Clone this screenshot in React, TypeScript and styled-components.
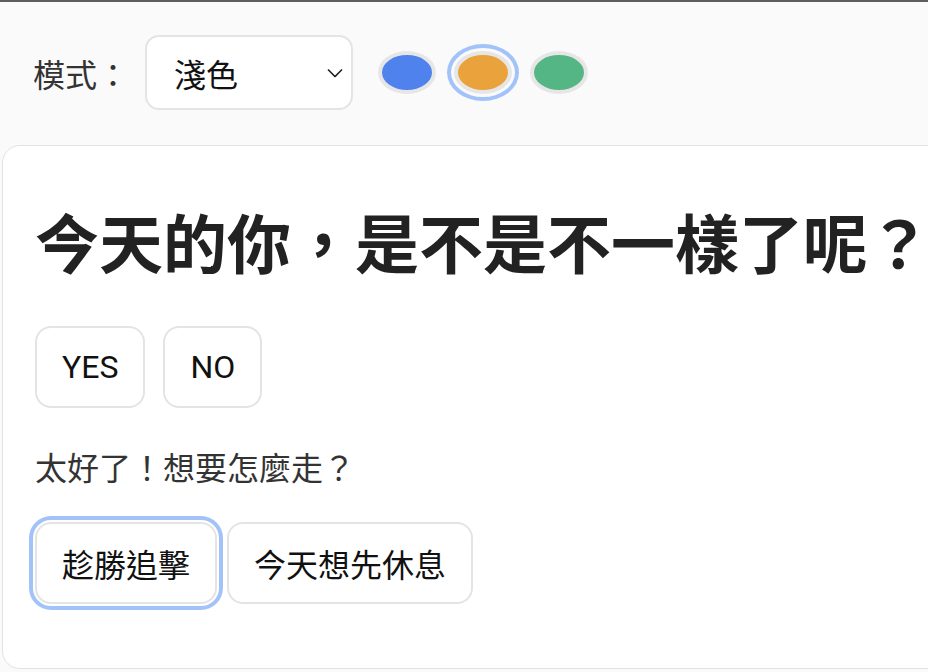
import React, { useState } from "react";
import styled, { createGlobalStyle, css } from "styled-components";

const GlobalStyle = createGlobalStyle`
  html, body {
    margin: 0;
    padding: 0;
    background: #fafafa;
    overflow: hidden;
  }
  body {
    font-family: "Roboto", "Noto Sans CJK TC", "Noto Sans", sans-serif;
    color: #222;
  }
  * { box-sizing: border-box; }
`;

const Page = styled.div`
  border-top: 2px solid #5e5e5e;
  min-height: 672px;
  padding-left: 2px;
  overflow: hidden;
`;

const Toolbar = styled.div`
  display: flex;
  align-items: center;
  padding: 33px 0 35px 31px;
`;

const Label = styled.span`
  font-size: 32px;
  color: #333;
  margin-right: 16px;
  font-family: "Noto Sans CJK TC", sans-serif;
`;

const SelectWrap = styled.div`
  position: relative;
  margin-right: 25px;
`;

const Select = styled.select`
  appearance: none;
  -webkit-appearance: none;
  width: 208px;
  height: 75px;
  border: 2px solid #e4e4e4;
  border-radius: 14px;
  background: #fff;
  padding: 0 0 0 27px;
  font-size: 32px;
  font-family: "Noto Sans CJK TC", sans-serif;
  color: #111;
  outline: none;
`;

const Chevron = styled.svg`
  position: absolute;
  right: 10px;
  top: 50%;
  transform: translateY(-50%);
  pointer-events: none;
`;

const Swatches = styled.div`
  display: flex;
  gap: 18px;
`;

const ring = css`
  box-shadow: 0 0 0 3px #fafafa, 0 0 0 7px #a2c3f9;
`;

const Swatch = styled.button<{ $color: string; $active?: boolean }>`
  width: 58px;
  height: 43px;
  border-radius: 50%;
  border: 4px solid #e6e6e6;
  background: ${(p) => p.$color};
  padding: 0;
  cursor: pointer;
  ${(p) => p.$active && ring}
`;

const Card = styled.div`
  width: 1000px;
  background: #fff;
  border: 1px solid #e2e2e2;
  border-radius: 18px;
  padding: 32px 32px 64px 32px;
`;

const Heading = styled.h1`
  margin: 25px 0 0;
  font-size: 64px;
  line-height: 74px;
  font-weight: 700;
  color: #222;
  white-space: nowrap;
  font-family: "Noto Sans CJK TC", sans-serif;
`;

const ButtonRow = styled.div<{ $gap: number; $top: number }>`
  display: flex;
  gap: ${(p) => p.$gap}px;
  margin-top: ${(p) => p.$top}px;
`;

const Btn = styled.button<{ $active?: boolean }>`
  height: 82px;
  padding: 0 25px;
  border: 2px solid #e4e4e4;
  border-radius: 16px;
  background: #fff;
  font-size: 32px;
  color: #111;
  font-family: "Roboto", "Noto Sans CJK TC", sans-serif;
  cursor: pointer;
  ${(p) =>
    p.$active &&
    css`
      box-shadow: 0 0 0 2px #fff, 0 0 0 6px #a2c3f9;
    `}
`;

const Prompt = styled.p`
  margin: 34px 0 0;
  font-size: 32px;
  line-height: 48px;
  color: #333;
  font-family: "Noto Sans CJK TC", sans-serif;
`;

const colors = [
  { key: "blue", value: "#4f82ec" },
  { key: "orange", value: "#e9a23c" },
  { key: "green", value: "#55b685" },
];

export default function App() {
  const [theme, setTheme] = useState("orange");
  const [mode, setMode] = useState("light");
  return (
    <>
      <GlobalStyle />
      <Page>
        <Toolbar>
          <Label>模式：</Label>
          <SelectWrap>
            <Select value={mode} onChange={(e) => setMode(e.target.value)}>
              <option value="light">淺色</option>
              <option value="dark">深色</option>
            </Select>
            <Chevron width="16" height="9" viewBox="0 0 16 9">
              <path d="M1 1l7 7 7-7" fill="none" stroke="#222" strokeWidth="1.6" />
            </Chevron>
          </SelectWrap>
          <Swatches>
            {colors.map((c) => (
              <Swatch
                key={c.key}
                $color={c.value}
                $active={theme === c.key}
                onClick={() => setTheme(c.key)}
                aria-label={c.key}
              />
            ))}
          </Swatches>
        </Toolbar>
        <Card>
          <Heading>今天的你，是不是不一樣了呢？</Heading>
          <ButtonRow $gap={18} $top={49}>
            <Btn>YES</Btn>
            <Btn>NO</Btn>
          </ButtonRow>
          <Prompt>太好了！想要怎麼走？</Prompt>
          <ButtonRow $gap={10} $top={32}>
            <Btn $active>趁勝追擊</Btn>
            <Btn>今天想先休息</Btn>
          </ButtonRow>
        </Card>
      </Page>
    </>
  );
}
